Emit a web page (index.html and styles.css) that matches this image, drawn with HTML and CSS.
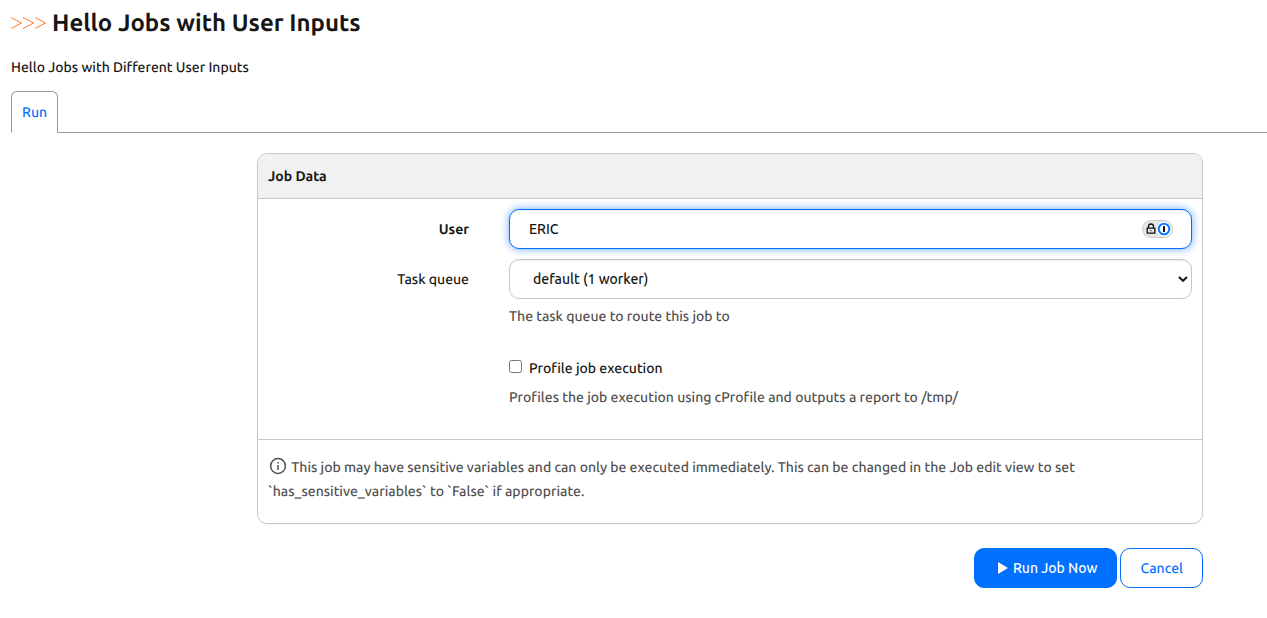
FILE: index.html
```html
<!DOCTYPE html>
<html lang="en">
<head>
<meta charset="utf-8">
<meta name="viewport" content="width=device-width, initial-scale=1">
<title>Hello Jobs with User Inputs</title>
<link rel="stylesheet" href="styles.css">
</head>
<body>
<header class="page-header">
  <h1 class="page-title">
    <svg class="title-mark" viewBox="0 0 36 14" aria-hidden="true"><path d="M0 1.500 10.500 7 0 12.500M12 1.500 22.500 7 12 12.500M24 1.500 34.500 7 24 12.500"/></svg>
    Hello Jobs with User Inputs
  </h1>
  <p class="description">Hello Jobs with Different User Inputs</p>
</header>
<nav class="tabs"><a class="tab" href="#run">Run</a></nav>
<main id="run">
  <form class="job-form">
    <section class="panel">
      <h2 class="panel-heading">Job Data</h2>
      <div class="panel-body">
        <div class="row">
          <label class="row-label required" for="user">User</label>
          <div class="field">
            <input class="control" id="user" type="text" value="ERIC">
            <svg class="badge" viewBox="0 0 31 18" aria-hidden="true">
              <rect class="badge-pill" x=".5" y=".5" width="30" height="17" rx="8.500"/>
              <path class="lock" d="M6.500 8V6.500a2.500 2.500 0 0 1 5 0V8M5.200 8.200h7.600v5H5.200z"/>
              <circle class="lock-dot" cx="9" cy="10.700" r=".6"/>
              <circle class="badge-halo" cx="22" cy="9" r="7.500"/>
              <circle class="badge-ring" cx="22" cy="9" r="5.300"/>
              <rect class="badge-key" x="21" y="6" width="2" height="6" rx=".5"/>
            </svg>
          </div>
        </div>
        <div class="row">
          <label class="row-label" for="queue">Task queue</label>
          <div class="field">
            <select class="control select" id="queue"><option>default (1 worker)</option></select>
            <svg class="chevron" viewBox="0 0 10 6" aria-hidden="true"><path d="M1 1 5 4.800 9 1"/></svg>
            <p class="help">The task queue to route this job to</p>
          </div>
        </div>
        <div class="row profile-row">
          <div class="field field-only">
            <label class="check"><input class="checkbox" type="checkbox"> Profile job execution</label>
            <p class="help">Profiles the job execution using cProfile and outputs a report to /tmp/</p>
          </div>
        </div>
      </div>
      <p class="panel-footer">
        <svg class="info" viewBox="0 0 20 18" aria-hidden="true"><circle cx="10" cy="9" r="7.400"/><path d="M10 8v5M10 5v1.600"/></svg>
        This job may have sensitive variables and can only be executed immediately. This can be changed in the Job edit view to set `has_sensitive_variables` to `False` if appropriate.
      </p>
    </section>
    <div class="actions">
      <button class="button primary" type="submit"><svg class="play" viewBox="0 0 10 12" aria-hidden="true"><path d="M0 0 10 6 0 12z"/></svg>Run Job Now</button>
      <a class="button" href="#cancel">Cancel</a>
    </div>
  </form>
</main>
</body>
</html>
```
FILE: styles.css
```css
* { box-sizing: border-box; }
body {
  margin: 0;
  background: #fff;
  color: #161616;
  font: 500 14px/24px Ubuntu, "Noto Sans", sans-serif;
  font-variant-ligatures: none;
  text-rendering: geometricPrecision;
}
h1, h2, p { margin: 0; }
.page-header { padding: 7px 11px 0; }
.page-title {
  display: flex;
  align-items: center;
  gap: 5px;
  font-size: 24px;
  line-height: 32px;
  font-weight: 600;
}
.title-mark {
  width: 36px;
  height: 14px;
  fill: none;
  stroke: #ff7a26;
  stroke-width: 1;
}
.description { margin-top: 16px; }
.tabs {
  display: flex;
  margin: 12px 0 20px 11px;
  border-bottom: 1px solid #999;
}
.tab {
  margin-bottom: -1px;
  padding: 8px 10px;
  border: 1px solid #999;
  border-bottom-color: #fff;
  border-radius: 6px 6px 0 0;
  background: #fff;
  color: #0070ff;
  text-decoration: none;
}
.job-form { margin: 0 64px 0 257px; }
.panel {
  border: 1px solid #c8c8c8;
  border-radius: 10px;
  box-shadow: 0 1px 1px rgba(0, 0, 0, .05);
  overflow: hidden;
}
.panel-heading {
  padding: 10px;
  border-bottom: 1px solid #c8c8c8;
  background: #f1f1f1;
  font-size: 14px;
  line-height: 24px;
  font-weight: 700;
}
.panel-body {
  display: grid;
  gap: 10px;
  padding: 10px 10px 30px;
}
.row {
  display: grid;
  grid-template-columns: 201px 1fr;
  column-gap: 40px;
}
.row-label { padding: 8px 0; text-align: right; }
.required { font-weight: 700; }
.field { position: relative; }
.field-only { grid-column: 2; }
.control {
  display: block;
  width: 100%;
  height: 40px;
  padding: 0 19px;
  border: 1px solid #c8c8c8;
  border-radius: 10px;
  outline: 0;
  background: #fff;
  color: #161616;
  font: inherit;
  box-shadow: inset 0 1px 1px rgba(0, 0, 0, .075);
}
input.control {
  border-color: #0070ff;
  box-shadow: inset 0 1px 1px rgba(0, 0, 0, .075), 0 0 8px rgba(0, 112, 255, .6);
}
.select { padding: 0 23px; appearance: none; }
.badge {
  position: absolute;
  top: 11px;
  right: 19px;
  width: 31px;
  height: 18px;
}
.badge-pill { fill: #e6e6e6; stroke: #ccc; }
.lock { fill: none; stroke: #111; stroke-width: 1.3; }
.lock-dot, .badge-key { fill: #111; }
.badge-halo { fill: #fff; }
.badge-ring { fill: #fff; stroke: #0a7cff; stroke-width: 2; }
.chevron {
  position: absolute;
  top: 17px;
  right: 4px;
  width: 10px;
  height: 6px;
  fill: none;
  stroke: #161616;
  stroke-width: 2;
  pointer-events: none;
}
.help { margin-top: 5px; color: #505050; }
.profile-row { padding-top: 18px; }
.check { display: flex; align-items: center; gap: 7px; }
.checkbox { width: 13px; height: 13px; margin: 0 0 3px; }
.panel-footer {
  padding: 15px 10px 20px;
  border-top: 1px solid #c8c8c8;
  color: #505050;
}
.info {
  width: 20px;
  height: 18px;
  vertical-align: text-bottom;
  fill: none;
  stroke: #505050;
  stroke-width: 1.5;
}
.actions {
  display: flex;
  justify-content: flex-end;
  gap: 3px;
  padding: 24px 0 30px;
}
.button {
  display: flex;
  align-items: center;
  gap: 5px;
  height: 40px;
  padding: 0 19px;
  border: 1px solid #0070ff;
  border-radius: 10px;
  background: #fff;
  color: #0070ff;
  font: inherit;
  text-decoration: none;
}
.primary { padding-left: 23px; background: #0070ff; color: #fff; }
.play { width: 10px; height: 12px; fill: currentColor; }
```
